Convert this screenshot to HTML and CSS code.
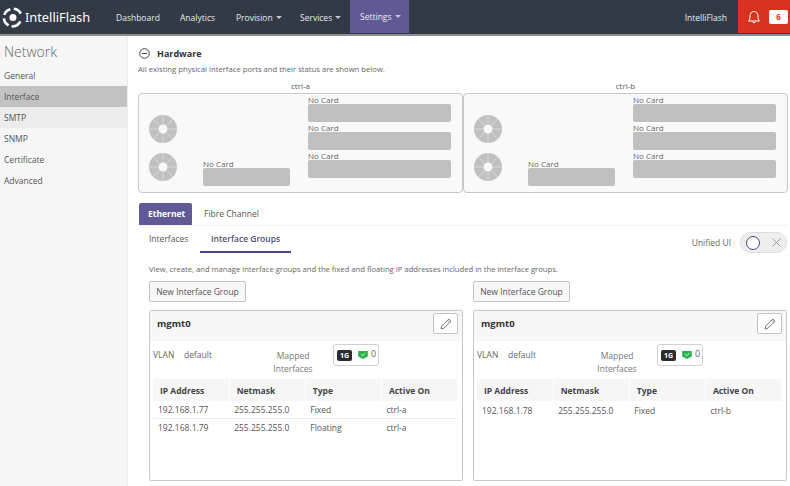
FILE: index.html
```html
<!DOCTYPE html>
<html>
<head>
    <title>IntelliFlash</title>
    <link rel="stylesheet" href="styles.css">
</head>
<body>
    <div class="navbar">
        <div class="brand">
            <svg class="brand-icon" width="21" height="21" viewBox="0 0 24 24" fill="none" stroke="#fff" stroke-width="3">
                <path d="M9.5 2.5 A10 10 0 0 0 2.6 9"/>
                <path d="M13.5 2 A10 10 0 0 1 21.5 7.5"/>
                <path d="M2.2 13 A10 10 0 0 0 7.5 21"/>
                <path d="M11 22 A10 10 0 0 0 21 16.5"/>
                <circle cx="12.5" cy="12" r="4" fill="#fff" stroke="none"/>
            </svg>
            <span class="brand-name">IntelliFlash</span>
        </div>
        <a class="nav-item nav-dashboard">Dashboard</a>
        <a class="nav-item nav-analytics">Analytics</a>
        <a class="nav-item nav-provision">Provision <span class="caret"></span></a>
        <a class="nav-item nav-services">Services <span class="caret"></span></a>
        <a class="nav-item nav-settings">Settings <span class="caret"></span></a>
        <span class="nav-user">IntelliFlash</span>
        <div class="alerts">
            <svg width="14" height="14" viewBox="0 0 14 14" fill="none" stroke="#fff" stroke-width="1">
                <path d="M1.5 11 C2.8 10 3 8.5 3 6 C3 3.2 4.6 1.5 7 1.5 C9.4 1.5 11 3.2 11 6 C11 8.5 11.2 10 12.5 11 Z"/>
                <path d="M5.5 11.5 C5.7 13.2 8.3 13.2 8.5 11.5"/>
            </svg>
            <span class="alert-count">6</span>
        </div>
    </div>

    <div class="page">
        <div class="sidebar">
            <h2>Network</h2>
            <a class="side-link">General</a>
            <a class="side-link active">Interface</a>
            <a class="side-link hover">SMTP</a>
            <a class="side-link">SNMP</a>
            <a class="side-link">Certificate</a>
            <a class="side-link">Advanced</a>
        </div>

        <div class="content">
            <div class="section-head">
                <svg width="11" height="11" viewBox="0 0 11 11" fill="none" stroke="#444" stroke-width="1">
                    <circle cx="5.5" cy="5.5" r="4.8"/>
                    <path d="M2.8 5.5 H8.2"/>
                </svg>
                <h3>Hardware</h3>
            </div>
            <p class="section-note">All existing physical interface ports and their status are shown below.</p>

            <div class="hardware">
                <div class="ctrl">
                    <div class="ctrl-name">ctrl-a</div>
                    <div class="chassis">
                        <div class="discs">
                            <svg class="disc" viewBox="0 0 28 28"><use href="#disc"/></svg>
                            <svg class="disc" viewBox="0 0 28 28"><use href="#disc"/></svg>
                        </div>
                        <div class="slot-low">
                            <div class="slot-label">No Card</div>
                            <div class="slot"></div>
                        </div>
                        <div class="slot-col">
                            <div class="slot-label">No Card</div>
                            <div class="slot"></div>
                            <div class="slot-label">No Card</div>
                            <div class="slot"></div>
                            <div class="slot-label">No Card</div>
                            <div class="slot"></div>
                        </div>
                    </div>
                </div>
                <div class="ctrl">
                    <div class="ctrl-name">ctrl-b</div>
                    <div class="chassis">
                        <div class="discs">
                            <svg class="disc" viewBox="0 0 28 28"><use href="#disc"/></svg>
                            <svg class="disc" viewBox="0 0 28 28"><use href="#disc"/></svg>
                        </div>
                        <div class="slot-low">
                            <div class="slot-label">No Card</div>
                            <div class="slot"></div>
                        </div>
                        <div class="slot-col">
                            <div class="slot-label">No Card</div>
                            <div class="slot"></div>
                            <div class="slot-label">No Card</div>
                            <div class="slot"></div>
                            <div class="slot-label">No Card</div>
                            <div class="slot"></div>
                        </div>
                    </div>
                </div>
            </div>

            <div class="tabs">
                <a class="tab selected">Ethernet</a>
                <a class="tab">Fibre Channel</a>
            </div>

            <div class="subbar">
                <a class="subtab">Interfaces</a>
                <a class="subtab current">Interface Groups</a>
                <div class="unified">
                    <span>Unified UI</span>
                    <div class="toggle">
                        <span class="knob"></span>
                        <svg width="9" height="9" viewBox="0 0 9 9" stroke="#999" stroke-width="1"><path d="M0.5 0.5 L8.5 8.5 M8.5 0.5 L0.5 8.5"/></svg>
                    </div>
                </div>
            </div>

            <p class="groups-note">View, create, and manage interface groups and the fixed and floating IP addresses included in the interface groups.</p>

            <div class="groups">
                <div class="group">
                    <button class="new-btn">New Interface Group</button>
                    <div class="card">
                        <div class="card-head">
                            <span class="card-title">mgmt0</span>
                            <button class="edit-btn">
                                <svg width="14" height="14" viewBox="0 0 14 14" fill="none" stroke="#777" stroke-width="1"><path d="M2 12 L2.8 9 L9.8 2 L12 4.2 L5 11.2 Z M8.6 3.2 L10.8 5.4"/></svg>
                            </button>
                        </div>
                        <div class="card-info">
                            <span class="vlan">VLAN</span>
                            <span class="vlan-name">default</span>
                            <span class="mapped">Mapped<br>Interfaces</span>
                            <div class="port-box">
                                <span class="speed">1G</span>
                                <svg width="10" height="8" viewBox="0 0 12 10"><path d="M0 0 H12 V7 L6 10 L0 7 Z" fill="#2ab24f"/><path d="M3.5 4 L5.5 6 L8.8 2.8" fill="none" stroke="#fff" stroke-width="1.1"/></svg>
                                <span class="port-count">0</span>
                            </div>
                        </div>
                        <table>
                            <tr><th>IP Address</th><th>Netmask</th><th>Type</th><th>Active On</th></tr>
                            <tr><td>192.168.1.77</td><td>255.255.255.0</td><td>Fixed</td><td>ctrl-a</td></tr>
                            <tr><td>192.168.1.79</td><td>255.255.255.0</td><td>Floating</td><td>ctrl-a</td></tr>
                        </table>
                    </div>
                </div>
                <div class="group">
                    <button class="new-btn">New Interface Group</button>
                    <div class="card">
                        <div class="card-head">
                            <span class="card-title">mgmt0</span>
                            <button class="edit-btn">
                                <svg width="14" height="14" viewBox="0 0 14 14" fill="none" stroke="#777" stroke-width="1"><path d="M2 12 L2.8 9 L9.8 2 L12 4.2 L5 11.2 Z M8.6 3.2 L10.8 5.4"/></svg>
                            </button>
                        </div>
                        <div class="card-info">
                            <span class="vlan">VLAN</span>
                            <span class="vlan-name">default</span>
                            <span class="mapped">Mapped<br>Interfaces</span>
                            <div class="port-box">
                                <span class="speed">1G</span>
                                <svg width="10" height="8" viewBox="0 0 12 10"><path d="M0 0 H12 V7 L6 10 L0 7 Z" fill="#2ab24f"/><path d="M3.5 4 L5.5 6 L8.8 2.8" fill="none" stroke="#fff" stroke-width="1.1"/></svg>
                                <span class="port-count">0</span>
                            </div>
                        </div>
                        <table>
                            <tr><th>IP Address</th><th>Netmask</th><th>Type</th><th>Active On</th></tr>
                            <tr><td>192.168.1.78</td><td>255.255.255.0</td><td>Fixed</td><td>ctrl-b</td></tr>
                        </table>
                    </div>
                </div>
            </div>
        </div>
    </div>

    <svg class="defs" width="0" height="0">
        <symbol id="disc" viewBox="0 0 28 28">
            <circle cx="14" cy="14" r="9.25" fill="none" stroke="#c0c0c0" stroke-width="9.5"/>
            <path d="M14 0 V9 M14 19 V28 M0 14 H9 M19 14 H28 M4 4 L10.5 10.5 M17.5 17.5 L24 24 M24 4 L17.5 10.5 M10.5 17.5 L4 24" stroke="#d8d8d8" stroke-width="1"/>
        </symbol>
    </svg>
</body>
</html>
```

FILE: styles.css
```css
* {
    box-sizing: border-box;
}

html, body {
    height: 100%;
}

body {
    margin: 0;
    font-family: "Open Sans", Arial, sans-serif;
    font-size: 9px;
    color: #555;
    background-color: white;
    overflow: hidden;
}

.defs {
    position: absolute;
}

/* top bar */
.navbar {
    display: flex;
    align-items: stretch;
    height: 36px;
    background-color: #323a45;
    border-bottom: 2px solid #8a8d92;
    color: #e8e8f0;
}

.brand {
    display: flex;
    align-items: center;
    width: 116px;
    padding-left: 2px;
}

.brand-name {
    margin-left: 2px;
    font-family: "Noto Sans", sans-serif;
    font-size: 12.8px;
    color: white;
}

.nav-item {
    display: flex;
    align-items: center;
    gap: 3px;
    font-size: 8.5px;
    white-space: nowrap;
}

.nav-dashboard {
    width: 64px;
}

.nav-analytics {
    width: 56px;
}

.nav-provision {
    width: 64px;
}

.nav-services {
    width: 50px;
}

.nav-settings {
    width: 59px;
    margin-bottom: 1px;
    padding-left: 10px;
    background-color: #5f5a96;
}

.caret {
    display: inline-block;
    border-left: 3px solid transparent;
    border-right: 3px solid transparent;
    border-top: 3px solid #c8c8d0;
}

.nav-user {
    display: flex;
    align-items: center;
    margin-left: auto;
    margin-right: 11px;
    font-size: 8.5px;
}

.alerts {
    display: flex;
    align-items: center;
    gap: 8px;
    width: 52px;
    margin-bottom: 1px;
    padding-left: 9px;
    background-color: #d9331f;
}

.alert-count {
    width: 19px;
    height: 14px;
    background-color: white;
    border-radius: 2px;
    color: #d9331f;
    font-size: 8px;
    font-weight: 700;
    line-height: 14px;
    text-align: center;
}

/* page */
.page {
    display: flex;
    height: 450px;
}

.sidebar {
    flex: none;
    width: 128px;
    background-color: #f6f6f6;
    border-right: 1px solid #ececec;
}

.sidebar h2 {
    margin: 6px 0 3px 4px;
    font-size: 14px;
    font-weight: 300;
    line-height: 20px;
    color: #666;
}

.side-link {
    display: block;
    height: 21px;
    padding-left: 4px;
    font-size: 8.5px;
    line-height: 21px;
    color: #555;
}

.side-link.active {
    background-color: #c2c2c2;
}

.side-link.hover {
    background-color: #ececec;
}

.content {
    flex: 1;
    min-width: 0;
    padding: 0 2px 0 10px;
}

.section-head {
    display: flex;
    align-items: center;
    gap: 7px;
    height: 14px;
    margin-top: 10px;
}

.section-head svg {
    margin-left: 1px;
    margin-top: 1px;
}

.section-head h3 {
    margin: 0;
    font-size: 9px;
    font-weight: 700;
    color: #333;
}

.section-note {
    margin: 3px 0 0;
    font-size: 7.7px;
    line-height: 12px;
    color: #666;
}

/* hardware panels */
.hardware {
    display: grid;
    grid-template-columns: 325px 325px;
    margin-top: 5px;
}

.ctrl-name {
    height: 13px;
    font-size: 8px;
    line-height: 12px;
    text-align: center;
    color: #555;
}

.chassis {
    display: flex;
    height: 100px;
    padding-right: 11px;
    background-color: #f9f9f9;
    border: 1px solid #c8c8c8;
    border-radius: 4px;
}

.discs {
    flex: none;
    display: flex;
    flex-direction: column;
    gap: 10px;
    width: 64px;
    padding: 21px 0 0 10px;
}

.disc {
    width: 28px;
    height: 28px;
}

.slot-low {
    flex: none;
    display: flex;
    flex-direction: column;
    justify-content: flex-end;
    width: 87px;
    padding-bottom: 6px;
    margin-right: 18px;
}

.slot-col {
    flex: 1;
}

.slot-label {
    height: 10px;
    font-size: 8px;
    line-height: 11px;
    color: #666;
}

.slot {
    height: 18px;
    background-color: #c0c0c0;
    border-radius: 2px;
}

/* tabs */
.tabs {
    display: flex;
    height: 23px;
    margin-top: 10px;
    margin-left: 1px;
    border-bottom: 1px solid #f0f0f0;
}

.tab {
    height: 22px;
    padding: 0 12px;
    font-size: 8.5px;
    line-height: 22px;
    color: #555;
}

.tab.selected {
    width: 53px;
    padding: 0 9px;
    background-color: #5f5a96;
    border-radius: 2px 2px 0 0;
    color: white;
    font-weight: 700;
}

.subbar {
    display: flex;
    align-items: flex-end;
    height: 27px;
}

.subtab {
    width: 62px;
    height: 27px;
    padding-left: 11px;
    font-size: 8.5px;
    line-height: 25px;
    color: #555;
}

.subtab.current {
    width: 91px;
    border-bottom: 2px solid #4a4488;
    font-weight: 600;
    color: #4f4f72;
}

.unified {
    display: flex;
    align-items: center;
    gap: 9px;
    margin-left: auto;
    margin-right: 1px;
    color: #666;
    font-size: 8.5px;
}

.toggle {
    display: flex;
    align-items: center;
    gap: 12px;
    width: 47px;
    height: 21px;
    padding-left: 5px;
    background-color: #eeeeee;
    border: 1px solid #dddddd;
    border-radius: 11px;
}

.knob {
    width: 14px;
    height: 14px;
    background-color: white;
    border: 1.5px solid #4a4488;
    border-radius: 50%;
}

.groups-note {
    margin: 10px 0 0 11px;
    font-size: 7.65px;
    line-height: 12px;
    color: #666;
}

/* interface group cards */
.groups {
    display: grid;
    grid-template-columns: 314px 314px;
    column-gap: 10px;
    margin-top: 6px;
    margin-left: 11px;
}

.new-btn {
    display: block;
    width: 97px;
    height: 21px;
    padding: 0;
    background-color: #f8f8f8;
    border: 1px solid #c4c4c4;
    border-radius: 2px;
    font-family: inherit;
    font-size: 8.5px;
    color: #555;
}

.card {
    height: 171px;
    margin-top: 8px;
    background-color: white;
    border: 1px solid #c8c8c8;
    border-radius: 2px;
}

.card-head {
    display: flex;
    align-items: flex-start;
    justify-content: space-between;
    height: 30px;
    padding: 2px 4px 0 7px;
    background-color: #f7f7f7;
}

.card-title {
    margin-top: 4px;
    font-size: 9.5px;
    font-weight: 700;
    color: #333;
}

.edit-btn {
    display: flex;
    align-items: center;
    justify-content: center;
    width: 25px;
    height: 21px;
    padding: 0;
    background-color: white;
    border: 1px solid #c4c4c4;
    border-radius: 2px;
}

.card-info {
    display: flex;
    align-items: flex-start;
    height: 38px;
    padding: 3px 0 0 3px;
    font-size: 8.5px;
    color: #666;
}

.vlan {
    width: 31px;
    margin-top: 5px;
}

.vlan-name {
    width: 80px;
    margin-top: 5px;
}

.mapped {
    width: 69px;
    margin-top: 5px;
    padding-right: 11px;
    line-height: 13px;
    text-align: center;
    color: #777;
}

.port-box {
    display: flex;
    align-items: center;
    gap: 6px;
    width: 46px;
    height: 22px;
    padding: 0 0 0 3px;
    border: 1px solid #d0d0d0;
    border-radius: 3px;
}

.speed {
    width: 15px;
    height: 11px;
    background-color: #2c2c2e;
    border-radius: 2px;
    color: white;
    font-size: 7px;
    font-weight: 700;
    line-height: 11px;
    text-align: center;
}

.port-count {
    margin-left: -3px;
    margin-top: -3px;
    font-size: 9px;
}

table {
    width: 305px;
    margin-left: 3px;
    border-collapse: collapse;
    table-layout: fixed;
    font-size: 8.5px;
}

th {
    height: 22px;
    padding: 0 0 0 7px;
    background-color: #f6f6f6;
    border-right: 1px solid white;
    font-weight: 700;
    text-align: left;
    color: #444;
}

td {
    height: 17px;
    padding: 1px 0 0 5px;
    border-bottom: 1px solid #eeeeee;
    color: #555;
}

tr:last-child td {
    border-bottom: none;
}
```
